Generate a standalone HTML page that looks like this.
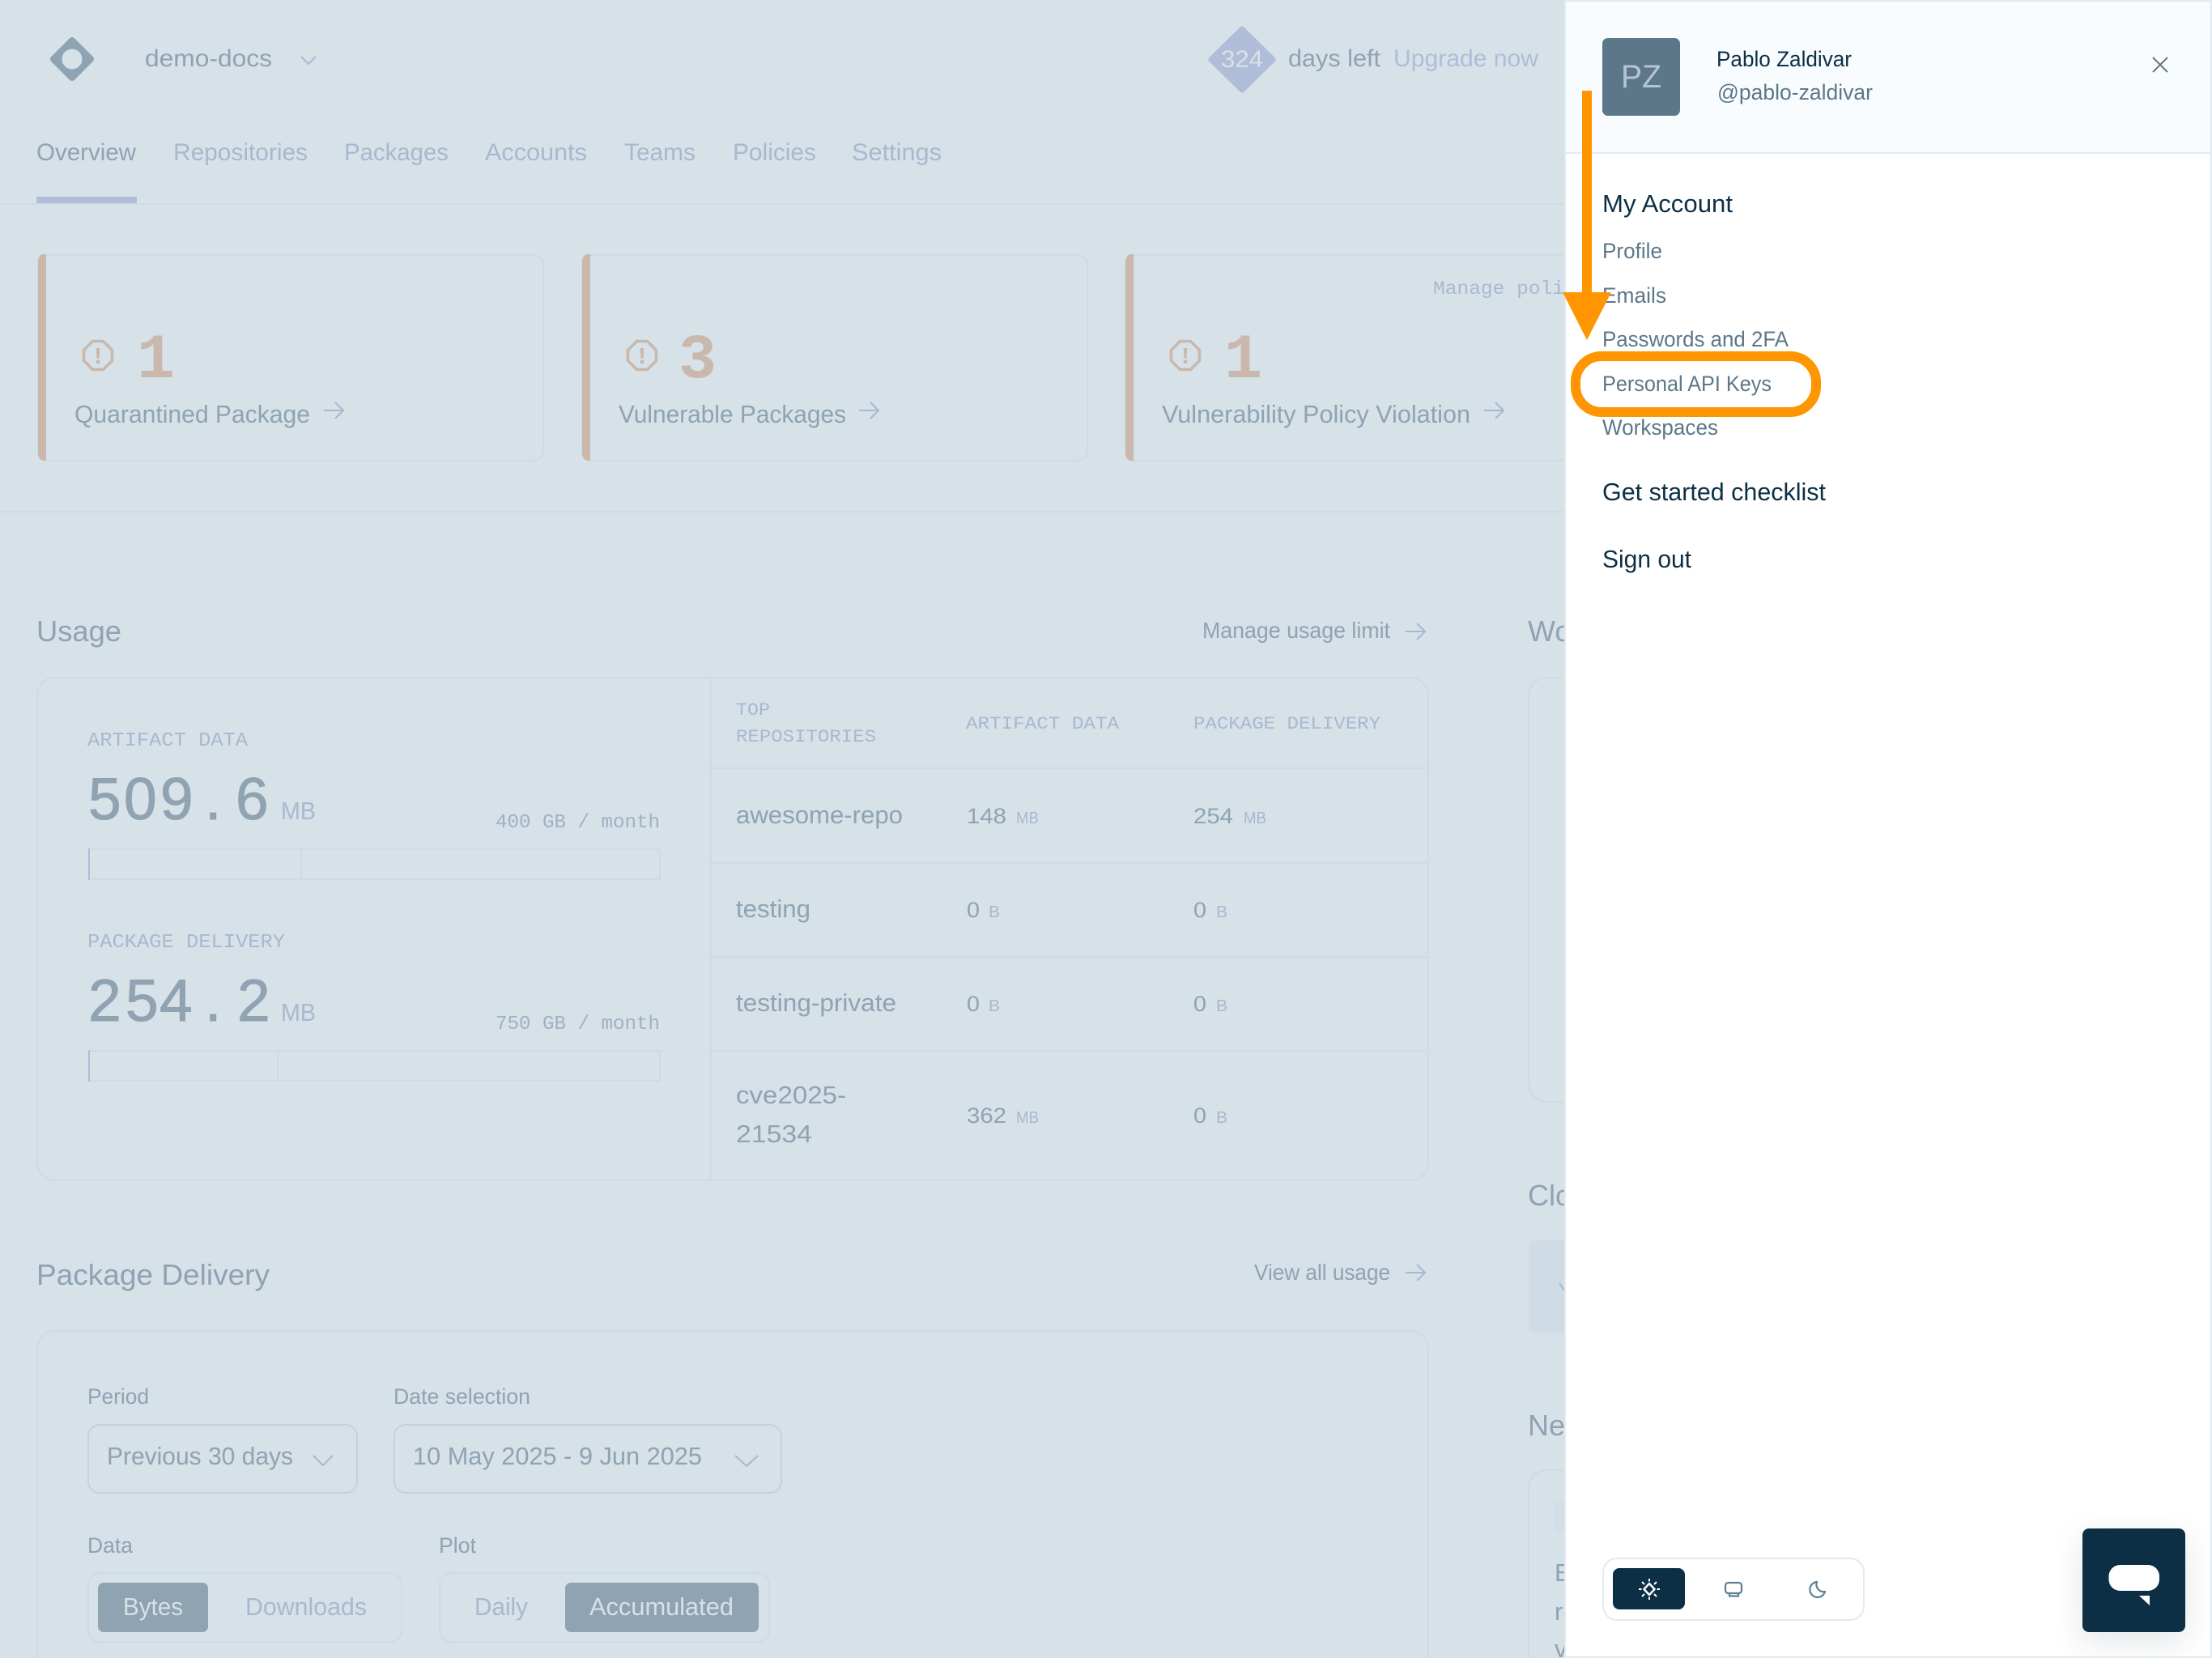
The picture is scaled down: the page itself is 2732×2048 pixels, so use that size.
<!DOCTYPE html>
<html lang="en">
<head>
<meta charset="utf-8">
<title>demo-docs</title>
<style>
html,body{margin:0;padding:0;width:2732px;height:2048px;overflow:hidden;background:#d6e1e8}
svg{display:block}
text{font-family:"Liberation Sans",sans-serif;fill:#8fa3b2}
.m{font-family:"Liberation Mono",monospace}
.l{fill:#a9b8cf}
.g{fill:#a0b1c2}
.n{fill:#0c2f45}
.p{fill:#5c7789}
.b{stroke:#8fa3b2;stroke-width:1}
.c{fill:none;stroke:#cddbe6;stroke-width:2}
.a{fill:none;stroke:#a9b8cf;stroke-width:2}
.o{fill:none;stroke:#c9b8ab;stroke-width:3.5}
</style>
</head>
<body>
<svg width="2732" height="2048" viewBox="0 0 2732 2048" xmlns="http://www.w3.org/2000/svg">
<defs>
<g id="oct"><path class="o" d="M-6.500 -17.500H6.500L17.500 -6.500V6.500L6.500 17.500H-6.500L-17.500 6.500V-6.500Z" stroke-linejoin="round"/><path d="M-2.200 -9H2.200L1.400 4H-1.400Z" fill="#c9b8ab"/><rect x="-2.200" y="6" width="4.400" height="4" fill="#c9b8ab"/></g>
<path id="arr" class="a" d="M-12 0H12M2 -10L12 0L2 10"/>
</defs>
<rect width="2732" height="2048" fill="#d6e1e8"/>

<!-- top bar -->
<path d="M89 50L112 73L89 96L66 73Z" fill="#8fa3b2" stroke="#8fa3b2" stroke-width="8" stroke-linejoin="round"/>
<circle cx="89" cy="73" r="12.500" fill="#d6e1e8"/>
<text x="179" y="82" font-size="30" textLength="157" lengthAdjust="spacingAndGlyphs">demo-docs</text>
<path class="a" d="M372 70L381 79L390 70"/>

<path d="M1534 36L1572 73.500L1534 111L1496 73.500Z" fill="#b0bdd8" stroke="#b0bdd8" stroke-width="7" stroke-linejoin="round"/>
<text x="1508" y="83" font-size="30" style="fill:#d6e1e8" textLength="52" lengthAdjust="spacingAndGlyphs">324</text>
<text x="1591" y="82" font-size="30" textLength="114" lengthAdjust="spacingAndGlyphs">days left</text>
<text x="1721" y="82" font-size="30" style="fill:#b0bdd8" textLength="179" lengthAdjust="spacingAndGlyphs">Upgrade now</text>

<!-- tabs -->
<text x="45" y="198" font-size="30" textLength="123" lengthAdjust="spacingAndGlyphs">Overview</text>
<text x="214" y="198" font-size="30" class="l" textLength="166" lengthAdjust="spacingAndGlyphs">Repositories</text>
<text x="425" y="198" font-size="30" class="l" textLength="129" lengthAdjust="spacingAndGlyphs">Packages</text>
<text x="599" y="198" font-size="30" class="l" textLength="126" lengthAdjust="spacingAndGlyphs">Accounts</text>
<text x="771" y="198" font-size="30" class="l" textLength="88" lengthAdjust="spacingAndGlyphs">Teams</text>
<text x="905" y="198" font-size="30" class="l" textLength="103" lengthAdjust="spacingAndGlyphs">Policies</text>
<text x="1052" y="198" font-size="30" class="l" textLength="111" lengthAdjust="spacingAndGlyphs">Settings</text>
<rect x="45" y="243" width="124" height="8" fill="#b0bdd8"/>
<rect x="0" y="251" width="1932" height="2" fill="#cddbe6"/>

<!-- alert cards -->
<rect class="c" x="47" y="315" width="624" height="254" rx="12"/>
<path d="M57 314H55Q47 314 47 324V559Q47 569 55 569H57Z" fill="#c9b8ab"/>
<use href="#oct" x="121" y="439"/>
<text class="m" x="169" y="466" font-size="78" font-weight="700" style="fill:#c9b8ab" textLength="47" lengthAdjust="spacingAndGlyphs">1</text>
<text x="92" y="522" font-size="31" textLength="291" lengthAdjust="spacingAndGlyphs">Quarantined Package</text>
<use href="#arr" x="412" y="507"/>

<rect class="c" x="719" y="315" width="624" height="254" rx="12"/>
<path d="M729 314H727Q719 314 719 324V559Q719 569 727 569H729Z" fill="#c9b8ab"/>
<use href="#oct" x="793" y="439"/>
<text class="m" x="838" y="466" font-size="78" font-weight="700" style="fill:#c9b8ab" textLength="47" lengthAdjust="spacingAndGlyphs">3</text>
<text x="764" y="522" font-size="31" textLength="281" lengthAdjust="spacingAndGlyphs">Vulnerable Packages</text>
<use href="#arr" x="1073" y="507"/>

<rect class="c" x="1390" y="315" width="624" height="254" rx="12"/>
<path d="M1400 314H1398Q1390 314 1390 324V559Q1390 569 1398 569H1400Z" fill="#c9b8ab"/>
<use href="#oct" x="1464" y="439"/>
<text class="m" x="1512" y="466" font-size="78" font-weight="700" style="fill:#c9b8ab" textLength="47" lengthAdjust="spacingAndGlyphs">1</text>
<text x="1435" y="522" font-size="31" textLength="381" lengthAdjust="spacingAndGlyphs">Vulnerability Policy Violation</text>
<use href="#arr" x="1845" y="507"/>
<text class="m l" x="1770" y="363" font-size="23" textLength="221" lengthAdjust="spacingAndGlyphs">Manage policies</text>

<rect x="0" y="631" width="1932" height="2" fill="#cddbe6"/>

<!-- usage -->
<text x="45" y="792" font-size="36" textLength="105" lengthAdjust="spacingAndGlyphs">Usage</text>
<text x="1485" y="788" font-size="28" textLength="232" lengthAdjust="spacingAndGlyphs">Manage usage limit</text>
<use href="#arr" x="1748" y="780"/>
<rect class="c" x="46" y="837" width="1718" height="621" rx="22"/>
<rect x="877" y="837" width="2" height="621" fill="#cddbe6"/>

<text class="m l" x="108" y="921" font-size="24" textLength="198" lengthAdjust="spacingAndGlyphs">ARTIFACT DATA</text>
<text class="b" x="109 153 198 253 291" y="1012" font-size="73">509.6</text>
<text class="l" x="347" y="1012" font-size="31" textLength="43" lengthAdjust="spacingAndGlyphs">MB</text>
<text class="m g" x="612" y="1022" font-size="24" textLength="203" lengthAdjust="spacingAndGlyphs">400 GB / month</text>
<rect class="c" x="110" y="1049" width="705" height="37"/>
<rect x="109" y="1048" width="2" height="39" fill="#b0bdd8"/>
<rect x="371" y="1048" width="2" height="38" fill="#cddbe6"/>

<text class="m l" x="108" y="1170" font-size="24" textLength="244" lengthAdjust="spacingAndGlyphs">PACKAGE DELIVERY</text>
<text class="b" x="109 155 197 253 293" y="1261" font-size="73">254.2</text>
<text class="l" x="347" y="1261" font-size="31" textLength="43" lengthAdjust="spacingAndGlyphs">MB</text>
<text class="m g" x="612" y="1271" font-size="24" textLength="203" lengthAdjust="spacingAndGlyphs">750 GB / month</text>
<rect class="c" x="110" y="1298" width="705" height="37"/>
<rect x="109" y="1297" width="2" height="39" fill="#b0bdd8"/>
<rect x="342" y="1297" width="2" height="38" fill="#cddbe6"/>

<!-- table -->
<text class="m l" x="909" y="883" font-size="22" textLength="42" lengthAdjust="spacingAndGlyphs">TOP</text>
<text class="m l" x="909" y="916" font-size="22" textLength="173" lengthAdjust="spacingAndGlyphs">REPOSITORIES</text>
<text class="m l" x="1193" y="900" font-size="22" textLength="189" lengthAdjust="spacingAndGlyphs">ARTIFACT DATA</text>
<text class="m l" x="1474" y="900" font-size="22" textLength="231" lengthAdjust="spacingAndGlyphs">PACKAGE DELIVERY</text>
<rect x="878" y="948" width="886" height="2" fill="#cddbe6"/>
<rect x="878" y="1065" width="886" height="2" fill="#cddbe6"/>
<rect x="878" y="1181" width="886" height="2" fill="#cddbe6"/>
<rect x="878" y="1297" width="886" height="2" fill="#cddbe6"/>

<text x="909" y="1017" font-size="31" textLength="206" lengthAdjust="spacingAndGlyphs">awesome-repo</text>
<text x="1194" y="1017" font-size="27" textLength="49" lengthAdjust="spacingAndGlyphs">148</text>
<text class="l" x="1255" y="1017" font-size="20" textLength="28" lengthAdjust="spacingAndGlyphs">MB</text>
<text x="1474" y="1017" font-size="27" textLength="49" lengthAdjust="spacingAndGlyphs">254</text>
<text class="l" x="1536" y="1017" font-size="20" textLength="28" lengthAdjust="spacingAndGlyphs">MB</text>

<text x="909" y="1133" font-size="31" textLength="92" lengthAdjust="spacingAndGlyphs">testing</text>
<text x="1194" y="1133" font-size="27" textLength="16" lengthAdjust="spacingAndGlyphs">0</text>
<text class="l" x="1221" y="1133" font-size="20" textLength="14" lengthAdjust="spacingAndGlyphs">B</text>
<text x="1474" y="1133" font-size="27" textLength="16" lengthAdjust="spacingAndGlyphs">0</text>
<text class="l" x="1502" y="1133" font-size="20" textLength="14" lengthAdjust="spacingAndGlyphs">B</text>

<text x="909" y="1249" font-size="31" textLength="198" lengthAdjust="spacingAndGlyphs">testing-private</text>
<text x="1194" y="1249" font-size="27" textLength="16" lengthAdjust="spacingAndGlyphs">0</text>
<text class="l" x="1221" y="1249" font-size="20" textLength="14" lengthAdjust="spacingAndGlyphs">B</text>
<text x="1474" y="1249" font-size="27" textLength="16" lengthAdjust="spacingAndGlyphs">0</text>
<text class="l" x="1502" y="1249" font-size="20" textLength="14" lengthAdjust="spacingAndGlyphs">B</text>

<text x="909" y="1363" font-size="31" textLength="136" lengthAdjust="spacingAndGlyphs">cve2025-</text>
<text x="909" y="1411" font-size="31" textLength="94" lengthAdjust="spacingAndGlyphs">21534</text>
<text x="1194" y="1387" font-size="27" textLength="49" lengthAdjust="spacingAndGlyphs">362</text>
<text class="l" x="1255" y="1387" font-size="20" textLength="28" lengthAdjust="spacingAndGlyphs">MB</text>
<text x="1474" y="1387" font-size="27" textLength="16" lengthAdjust="spacingAndGlyphs">0</text>
<text class="l" x="1502" y="1387" font-size="20" textLength="14" lengthAdjust="spacingAndGlyphs">B</text>

<!-- package delivery -->
<text x="45" y="1587" font-size="36" textLength="288" lengthAdjust="spacingAndGlyphs">Package Delivery</text>
<text x="1549" y="1581" font-size="28" textLength="168" lengthAdjust="spacingAndGlyphs">View all usage</text>
<use href="#arr" x="1748" y="1572"/>
<rect class="c" x="46" y="1644" width="1718" height="460" rx="22"/>
<text x="108" y="1734" font-size="27" textLength="76" lengthAdjust="spacingAndGlyphs">Period</text>
<text x="486" y="1734" font-size="27" textLength="169" lengthAdjust="spacingAndGlyphs">Date selection</text>
<rect x="109" y="1760" width="332" height="84" rx="14" fill="none" stroke="#c4d2dd" stroke-width="2"/>
<text x="132" y="1809" font-size="31" textLength="230" lengthAdjust="spacingAndGlyphs">Previous 30 days</text>
<path class="a" d="M387 1798L399 1810L411 1798"/>
<rect x="487" y="1760" width="478" height="84" rx="14" fill="none" stroke="#c4d2dd" stroke-width="2"/>
<text x="510" y="1809" font-size="31" textLength="357" lengthAdjust="spacingAndGlyphs">10 May 2025 - 9 Jun 2025</text>
<path class="a" d="M908 1798L922 1811L936 1798"/>

<text x="108" y="1918" font-size="27" textLength="56" lengthAdjust="spacingAndGlyphs">Data</text>
<text x="542" y="1918" font-size="27" textLength="46" lengthAdjust="spacingAndGlyphs">Plot</text>
<rect class="c" x="109" y="1943" width="387" height="85" rx="14"/>
<rect x="121" y="1955" width="136" height="61" rx="7" fill="#8fa3b2"/>
<text x="152" y="1995" font-size="31" style="fill:#d6e1e8" textLength="74" lengthAdjust="spacingAndGlyphs">Bytes</text>
<text x="303" y="1995" font-size="31" class="l" textLength="150" lengthAdjust="spacingAndGlyphs">Downloads</text>
<rect class="c" x="543" y="1943" width="407" height="85" rx="14"/>
<text x="586" y="1995" font-size="31" class="l" textLength="66" lengthAdjust="spacingAndGlyphs">Daily</text>
<rect x="698" y="1955" width="239" height="61" rx="7" fill="#8fa3b2"/>
<text x="728" y="1995" font-size="31" style="fill:#d6e1e8" textLength="178" lengthAdjust="spacingAndGlyphs">Accumulated</text>

<!-- right column, clipped by panel -->
<text x="1887" y="792" font-size="36">Workspace</text>
<rect class="c" x="1888" y="837" width="200" height="524" rx="22"/>
<text x="1887" y="1489" font-size="36">Cloud</text>
<rect x="1888" y="1532" width="100" height="114" rx="6" fill="#cfdbe5"/>
<path class="a" d="M1926 1585L1932 1594"/>
<text x="1887" y="1773" font-size="36">News</text>
<rect class="c" x="1888" y="1816" width="200" height="300" rx="22"/>
<rect x="1920" y="1854" width="60" height="38" rx="4" fill="#d3dee7"/>
<text x="1920" y="1953" font-size="31">Ev</text>
<text x="1920" y="2001" font-size="31">re</text>
<text x="1920" y="2047" font-size="31">vi</text>

<!-- side panel -->
<rect x="1932" y="0" width="800" height="2048" fill="#e2eaf2"/>
<rect x="1934" y="2" width="796" height="2044" fill="#fff"/>
<rect x="1934" y="2" width="796" height="186" fill="#f9fcff"/>
<rect x="1934" y="188" width="796" height="2" fill="#e2eaf2"/>
<rect x="1979" y="47" width="96" height="96" rx="7" fill="#5c7789"/>
<text x="2002" y="108" font-size="40" style="fill:#b6c2d8" textLength="50" lengthAdjust="spacingAndGlyphs">PZ</text>
<text class="n" x="2120" y="82" font-size="27" textLength="167" lengthAdjust="spacingAndGlyphs">Pablo Zaldivar</text>
<text class="p" x="2121" y="123" font-size="27" textLength="192" lengthAdjust="spacingAndGlyphs">@pablo-zaldivar</text>
<path d="M2659 71L2677 89M2677 71L2659 89" fill="none" stroke="#5c7789" stroke-width="2"/>

<text class="n" x="1979" y="262" font-size="31" textLength="161" lengthAdjust="spacingAndGlyphs">My Account</text>
<text class="p" x="1979" y="319" font-size="27" textLength="74" lengthAdjust="spacingAndGlyphs">Profile</text>
<text class="p" x="1979" y="374" font-size="27" textLength="79" lengthAdjust="spacingAndGlyphs">Emails</text>
<text class="p" x="1979" y="428" font-size="27" textLength="230" lengthAdjust="spacingAndGlyphs">Passwords and 2FA</text>
<text class="p" x="1979" y="483" font-size="27" textLength="209" lengthAdjust="spacingAndGlyphs">Personal API Keys</text>
<text class="p" x="1979" y="537" font-size="27" textLength="143" lengthAdjust="spacingAndGlyphs">Workspaces</text>
<text class="n" x="1979" y="618" font-size="31" textLength="276" lengthAdjust="spacingAndGlyphs">Get started checklist</text>
<text class="n" x="1979" y="701" font-size="31" textLength="110" lengthAdjust="spacingAndGlyphs">Sign out</text>

<!-- theme toggle -->
<rect x="1980" y="1925" width="322" height="76" rx="17" fill="#fff" stroke="#e2eaf2" stroke-width="2"/>
<rect x="1992" y="1937" width="89" height="51" rx="8" fill="#0c2f45"/>
<g fill="none" stroke="#fff" stroke-width="2">
<path d="M2037 1956L2043.500 1963L2037 1970L2030.500 1963Z" stroke-width="2.500" stroke-linejoin="round"/>
<path d="M2037 1950V1953.500M2037 1972.500V1976M2024 1963H2027.500M2046.500 1963H2050M2028 1954L2031 1957M2046 1954L2043 1957M2028 1972L2031 1969M2046 1972L2043 1969"/>
</g>
<g fill="none" stroke="#5c7f95" stroke-width="2.200">
<rect x="2131" y="1955" width="20" height="13" rx="3.500"/>
<path d="M2136 1968V1971.500H2147V1968"/>
<path d="M2244 1954A9.500 9.500 0 1 0 2254 1966A9 9 0 0 1 2244 1954Z" stroke-linejoin="round"/>
</g>

<!-- chat button -->
<defs><filter id="sh" x="-50%" y="-50%" width="200%" height="200%"><feGaussianBlur stdDeviation="20"/></filter></defs>
<rect x="2572" y="1900" width="127" height="128" fill="#0c2f45" opacity=".12" filter="url(#sh)"/>
<rect x="2572" y="1888" width="127" height="128" rx="8" fill="#0c2f45"/>
<rect x="2604.500" y="1933" width="62.500" height="32" rx="14" fill="#fff"/>
<path d="M2642 1971H2655V1983Z" fill="#fff"/>
<rect x="1932" y="2046" width="800" height="2" fill="#e2eaf2"/>
<rect x="2730" y="0" width="2" height="2048" fill="#e2eaf2"/>

<!-- annotation -->
<rect x="1954" y="112" width="12" height="250" fill="#ff9500"/>
<path d="M1930 361H1990L1960 420Z" fill="#ff9500"/>
<rect x="1946" y="440" width="297" height="69" rx="32" fill="none" stroke="#ff9500" stroke-width="12"/>
</svg>
</body>
</html>
